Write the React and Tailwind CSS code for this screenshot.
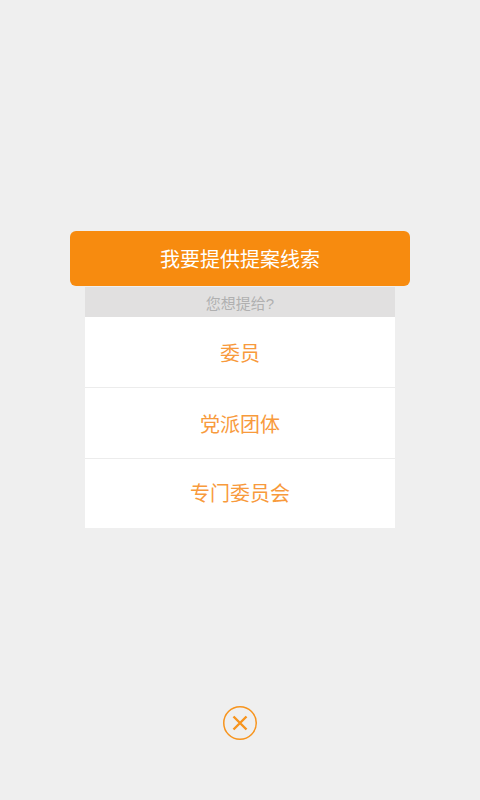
const FONT = "font-['Liberation_Sans','Noto_Sans_CJK_SC',sans-serif]";

const options = ['委员', '党派团体', '专门委员会'];

export default function App() {
    return (
        <div className={`${FONT} h-[800px] w-[480px] overflow-hidden bg-[#efefef] pt-[231px] flex flex-col items-center`}>
            {/* Header */}
            <div className="w-[340px] h-[55px] rounded-[6px] bg-[#f78b0f] text-white text-[20px] leading-[58px] text-center">
                我要提供提案线索
            </div>

            {/* Sub title */}
            <div className="mt-px w-[310px] h-[30px] bg-[#e1e0e0] text-[#b0b0b0] text-[15px] leading-[34px] text-center">
                您想提给?
            </div>

            {/* Options */}
            <div className="w-[310px] bg-white">
                {options.map((label, idx) => (
                    <div
                        key={label}
                        className={`text-[#f89a3c] text-[20px] text-center ${
                            idx === 0
                                ? 'h-[71px] leading-[75px] border-b border-[#ececec]'
                                : idx === 1
                                  ? 'h-[71px] leading-[74px] border-b border-[#ececec]'
                                  : 'h-[69px] leading-[71px]'
                        }`}
                    >
                        {label}
                    </div>
                ))}
            </div>

            {/* Close */}
            <button className="mt-[178px] w-[34px] h-[34px]">
                <svg width="34" height="34" viewBox="0 0 34 34" fill="none" stroke="#f7941d">
                    <circle cx="17" cy="17" r="16.25" strokeWidth="1.5" />
                    <path d="M10.5 10.5L23.5 23.5M23.5 10.5L10.5 23.5" strokeWidth="2.4" />
                </svg>
            </button>
        </div>
    );
}
